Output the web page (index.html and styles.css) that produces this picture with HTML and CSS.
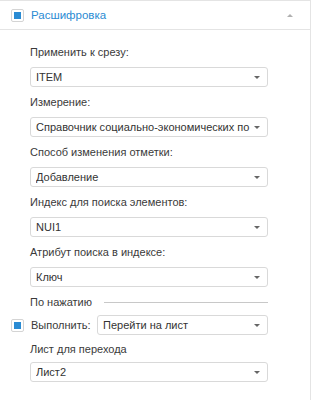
FILE: index.html
```html
<!DOCTYPE html>
<html lang="ru">
<head>
<meta charset="UTF-8">
<title>Расшифровка</title>
<link rel="stylesheet" href="styles.css">
</head>
<body>

<div class="panel">
    <div class="panel-head">
        <span class="check"><span class="check-mark"></span></span>
        <span class="panel-title">Расшифровка</span>
        <span class="collapse"></span>
    </div>

    <div class="panel-body">
        <div class="field">
            <div class="label">Применить к срезу:</div>
            <div class="select"><span class="select-text">ITEM</span><span class="caret"></span></div>
        </div>
        <div class="field">
            <div class="label">Измерение:</div>
            <div class="select"><span class="select-text">Справочник социально-экономических по</span><span class="caret"></span></div>
        </div>
        <div class="field">
            <div class="label">Способ изменения отметки:</div>
            <div class="select"><span class="select-text">Добавление</span><span class="caret"></span></div>
        </div>
        <div class="field">
            <div class="label">Индекс для поиска элементов:</div>
            <div class="select"><span class="select-text">NUI1</span><span class="caret"></span></div>
        </div>
        <div class="field">
            <div class="label">Атрибут поиска в индексе:</div>
            <div class="select"><span class="select-text">Ключ</span><span class="caret"></span></div>
        </div>

        <div class="group-title">
            <span>По нажатию</span>
            <span class="group-line"></span>
        </div>

        <div class="action-row">
            <span class="check"><span class="check-mark"></span></span>
            <span class="action-label">Выполнить:</span>
            <div class="select select-grow"><span class="select-text">Перейти на лист</span><span class="caret"></span></div>
        </div>

        <div class="field field-last">
            <div class="label">Лист для перехода</div>
            <div class="select"><span class="select-text">Лист2</span><span class="caret"></span></div>
        </div>
    </div>
</div>

</body>
</html>
```

FILE: styles.css
```css
body {
    margin: 0;
    padding: 0;
    background-color: #fff;
    font-family: "Liberation Sans", Arial, sans-serif;
    font-size: 11px;
    color: #3a3a3a;
}

.panel {
    width: 310px;
    height: 399px;
    border-top: 1px solid #e4e4e4;
    border-right: 1px solid #e4e4e4;
}

.panel-head {
    display: flex;
    align-items: center;
    height: 28px;
    padding-left: 11px;
    border-bottom: 1px solid #e4e4e4;
}

.check {
    display: flex;
    align-items: center;
    justify-content: center;
    width: 11px;
    height: 11px;
    border: 1px solid #d4d4d4;
    border-radius: 2px;
    background-color: #fff;
    flex-shrink: 0;
}

.check-mark {
    width: 7px;
    height: 7px;
    background-color: #2a8bd3;
}

.panel-title {
    margin-left: 7px;
    color: #2a8bd3;
    font-size: 11.5px;
}

.collapse {
    margin-left: auto;
    margin-right: 17px;
    width: 0;
    height: 0;
    border-left: 3px solid transparent;
    border-right: 3px solid transparent;
    border-bottom: 3px solid #b0b0b0;
}

.panel-body {
    padding: 14px 42px 0 30px;
}

.field {
    margin-bottom: 7px;
}

.label {
    line-height: 16px;
    height: 16px;
    margin-bottom: 7px;
    white-space: nowrap;
}

.select {
    display: flex;
    align-items: center;
    height: 18px;
    border: 1px solid #d9d9d9;
    border-radius: 3px;
    padding: 0 7px 0 5px;
    color: #333;
    background-color: #fff;
}

.select-text {
    flex: 1;
    overflow: hidden;
    white-space: nowrap;
    line-height: 18px;
}

.caret {
    margin-left: 2px;
    width: 0;
    height: 0;
    border-left: 3px solid transparent;
    border-right: 3px solid transparent;
    border-top: 3px solid #666;
    flex-shrink: 0;
}

.group-title {
    display: flex;
    align-items: center;
    height: 16px;
    line-height: 16px;
    margin-top: 1px;
    margin-bottom: 5px;
}

.group-line {
    flex: 1;
    margin-left: 12px;
    border-top: 1px solid #c8c8c8;
}

.action-row {
    display: flex;
    align-items: center;
    margin-left: -19px;
    margin-bottom: 6px;
}

.action-label {
    width: 60px;
    margin-left: 7px;
    margin-right: 6px;
    white-space: nowrap;
    flex-shrink: 0;
}

.select-grow {
    flex: 1;
}

.field-last .label {
    margin-bottom: 5px;
}
```
